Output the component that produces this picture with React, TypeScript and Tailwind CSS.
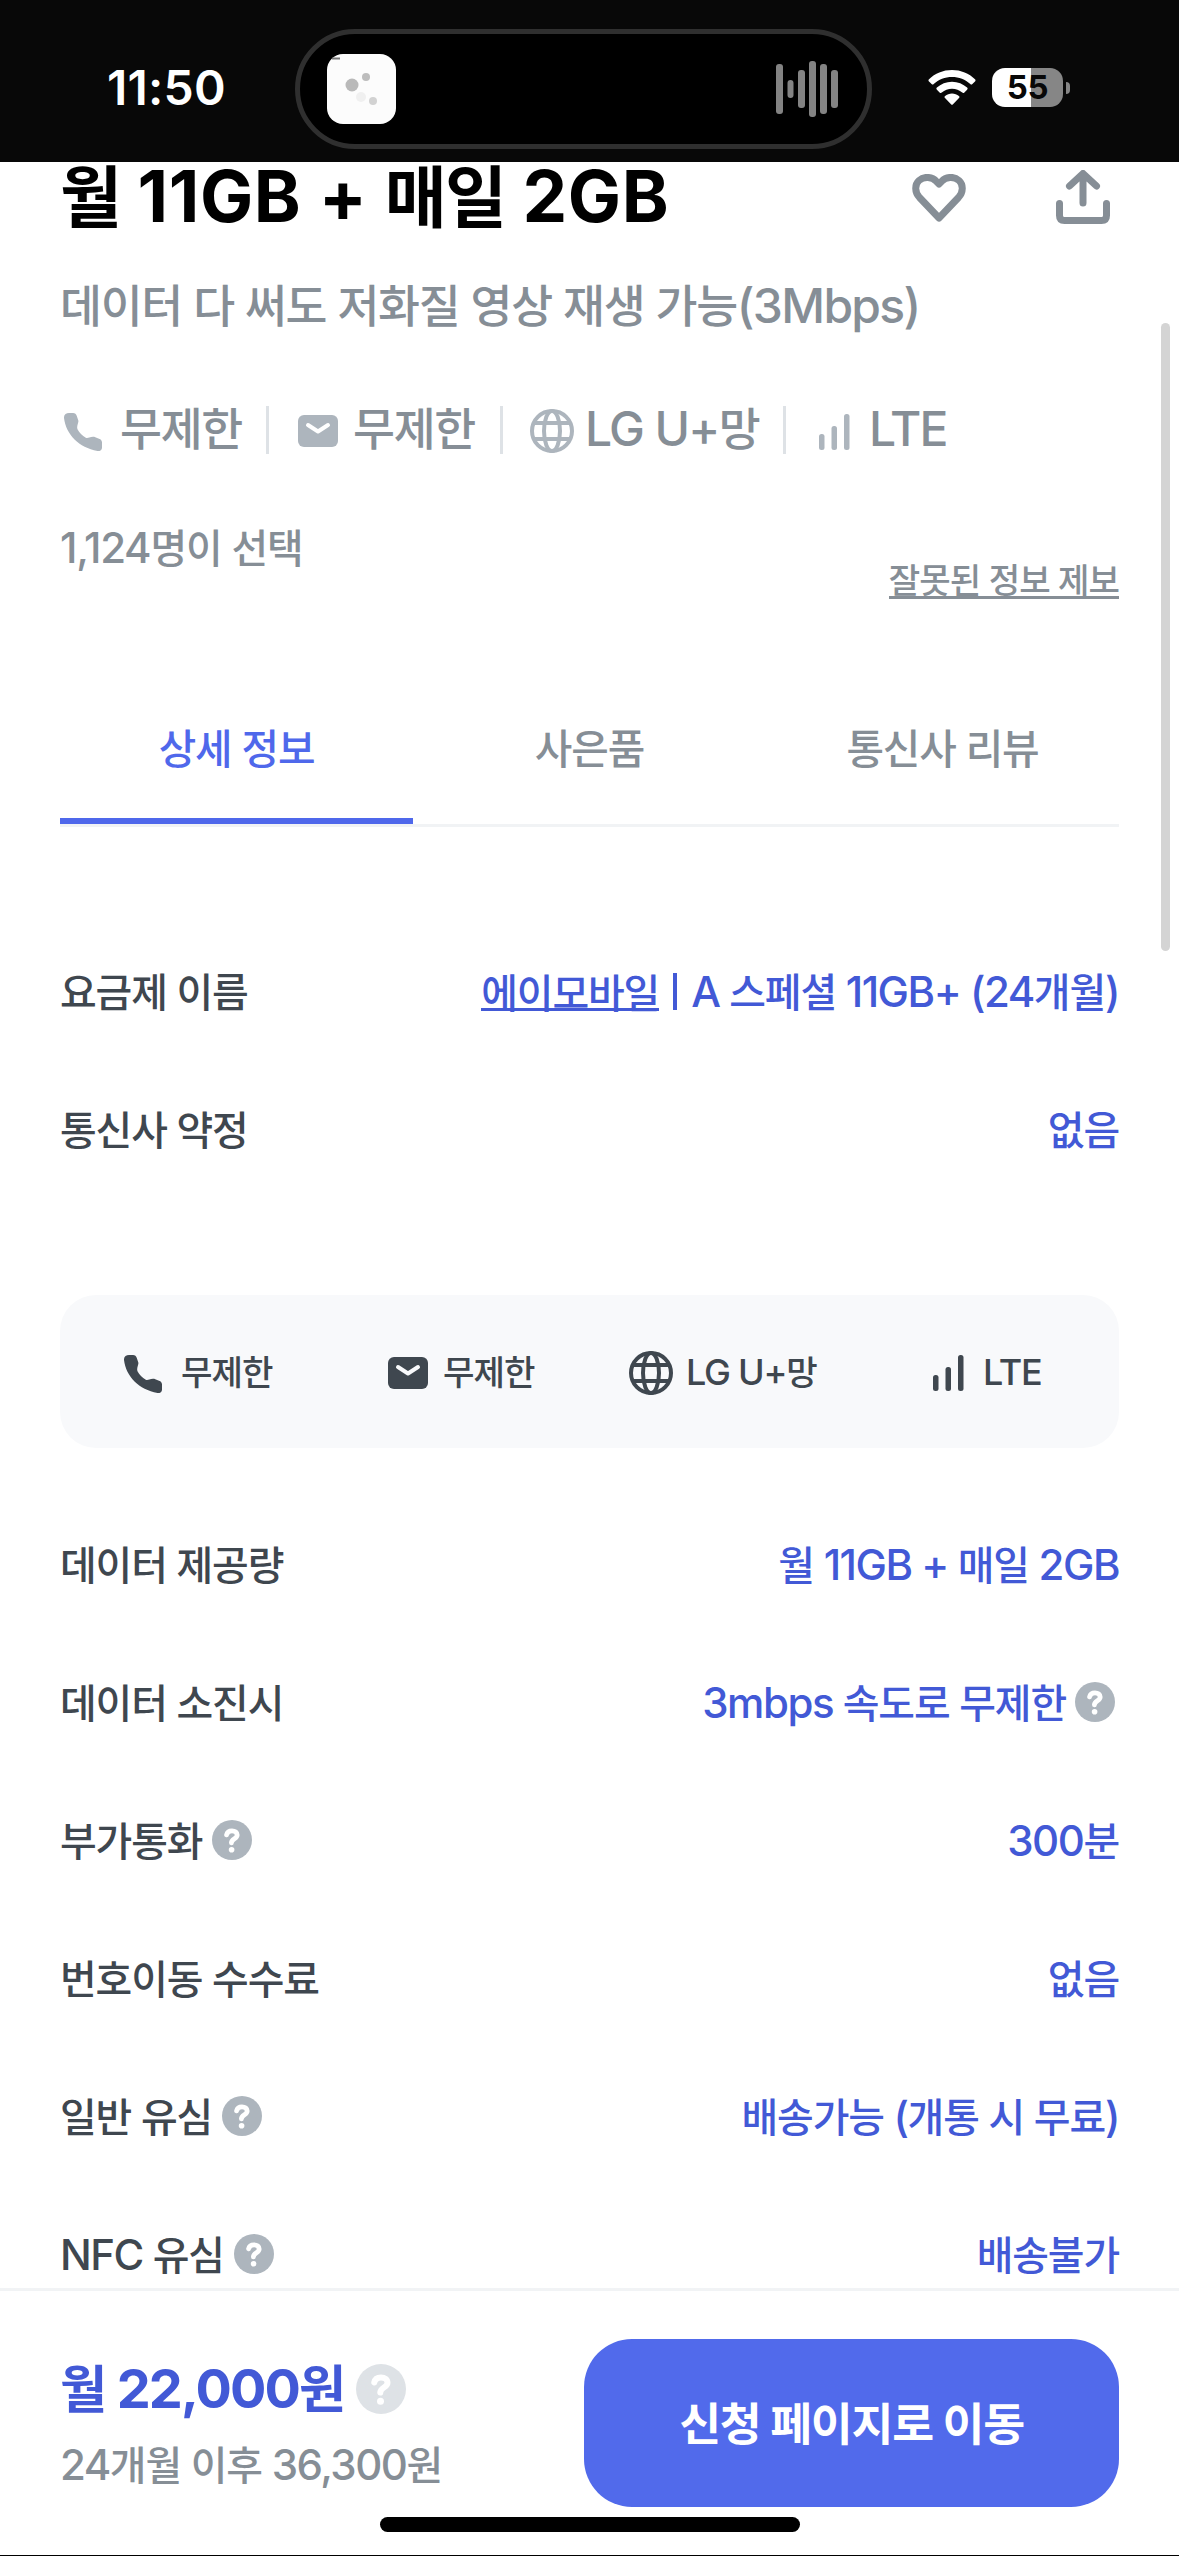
import React from "react";

const HANGUL = /([\u3131-\u318e\uac00-\ud7a3]+)/;

/** Mixed Latin / Hangul text: each script gets its own face and tracking. */
function T({ children, className = "tracking-[-0.035em]" }: { children: string; className?: string }) {
  return (
    <span className={`whitespace-pre ${className}`}>
      {children.split(HANGUL).map((part, i) =>
        HANGUL.test(part) ? (
          <span
            key={i}
            className="font-['Noto_Sans_CJK_KR',sans-serif] text-[0.95em] leading-none tracking-[-0.028em]"
          >
            {part}
          </span>
        ) : (
          part
        ),
      )}
    </span>
  );
}

function PhoneIcon() {
  return (
    <svg width="38" height="38" viewBox="0 0 38 38" fill="currentColor">
      <path d="M5 0H9C11 0 12.2 1.2 12.8 3L14.3 7.6C14.6 8.6 14.2 9.4 13.9 10.4C13.3 12.4 12.8 14.4 13.5 16.2C15.3 19.6 18.2 22.8 21.8 24.7C23 25.3 24 24.9 25.3 24.5C27.2 23.9 29.4 23.6 31.3 24.2L35.6 26.1C37.2 26.8 38 28 38 29.6V34.5C38 37 36 38.6 33.5 38C15 34.6 2 21.5 0 5C-.3 2.200 1.800 0 5 0Z" />
    </svg>
  );
}

function MailIcon({ flap }: { flap: string }) {
  return (
    <svg width="40" height="32" viewBox="0 0 40 32">
      <rect width="40" height="32" rx="6" fill="currentColor" />
      <path d="M10 10L20 16.500L30 10" fill="none" stroke={flap} strokeWidth="4" strokeLinecap="round" strokeLinejoin="round" />
    </svg>
  );
}

function GlobeIcon() {
  return (
    <svg width="44" height="44" viewBox="0 0 44 44" fill="none" stroke="currentColor" strokeWidth="4">
      <circle cx="22" cy="22" r="20" />
      <ellipse cx="22" cy="22" rx="8" ry="20" />
      <path d="M4 14H40M4 30H40" />
    </svg>
  );
}

function SignalIcon() {
  return (
    <svg width="31" height="36" viewBox="0 0 31 36" fill="currentColor">
      <rect x="0" y="20" width="5.500" height="16" rx="2.500" />
      <rect x="12.500" y="12" width="5.500" height="24" rx="2.500" />
      <rect x="25" y="0" width="5.500" height="36" rx="2.500" />
    </svg>
  );
}

function HelpIcon({ size = 40 }: { size?: number }) {
  return (
    <svg width={size} height={size} viewBox="0 0 40 40" fill="none">
      <circle cx="20" cy="20" r="20" fill="currentColor" />
      <path d="M14.600 14.800C15.200 12 17.300 10.800 20 10.800C23 10.800 25.200 12.300 25.200 15C25.200 18.800 19.600 18.600 19.400 22.800" stroke="#fff" strokeWidth="4.800" strokeLinecap="round" strokeLinejoin="round" />
      <circle cx="19.600" cy="29.800" r="2.800" fill="#fff" />
    </svg>
  );
}

function StatusBar() {
  return (
    <header className="relative z-10 flex h-[162px] shrink-0 items-start bg-[#080808] text-white">
      <div className="ml-[107px] mt-[58px] w-[188px] text-[48px] font-semibold leading-[60px] tracking-[0.005em]">11:50</div>
      <div className="mt-[29px] flex h-[120px] w-[577px] items-center justify-between rounded-full border-[5px] border-[#2f2f2f] bg-black pl-[27px] pr-[28px]">
        <svg width="69" height="70" viewBox="0 0 69 70">
          <rect width="69" height="70" rx="16" fill="#fcfcfc" />
          <circle cx="25" cy="31" r="6.500" fill="#b9b9b9" />
          <circle cx="39" cy="23" r="4" fill="#bdbdbd" />
          <circle cx="34" cy="43" r="5" fill="#f0f0f0" />
          <circle cx="46" cy="47" r="4" fill="#d2d2d2" />
          <path d="M5 4.500H13" stroke="#777" strokeWidth="2" />
        </svg>
        <svg width="63" height="56" viewBox="0 0 63 56" fill="#838383">
          <rect x="0" y="3" width="7" height="50" rx="3" />
          <rect x="11.500" y="19" width="6" height="18" rx="3" />
          <rect x="22" y="9" width="7" height="38" rx="3" />
          <rect x="33" y="0" width="7" height="56" rx="3" />
          <rect x="44" y="3" width="7" height="50" rx="3" />
          <rect x="55" y="9" width="7" height="38" rx="3" />
        </svg>
      </div>
      <svg className="ml-[56px] mt-[70px]" width="48" height="35" viewBox="0 0 48 35" fill="#fff">
        <path d="M24 0C33 0 41 3.400 47 9.200C47.700 9.900 47.700 10.700 47 11.400L44.400 14C43.700 14.700 43 14.700 42.300 14C37.400 9.400 31 6.900 24 6.900C17 6.900 10.600 9.400 5.700 14C5 14.700 4.300 14.700 3.600 14L1 11.400C.3 10.700 .3 9.900 1 9.200C7 3.400 15 0 24 0Z" />
        <path d="M24 11.800C29.800 11.800 35.100 14 39.100 17.600C39.800 18.300 39.800 19 39.100 19.700L36.400 22.400C35.700 23.100 35 23.100 34.200 22.500C31.400 20.100 27.900 18.700 24 18.700C20.100 18.700 16.600 20.100 13.800 22.500C13 23.100 12.300 23.100 11.600 22.400L8.900 19.700C8.200 19 8.200 18.300 8.900 17.600C12.900 14 18.200 11.800 24 11.800Z" />
        <path d="M24 23.600C26.600 23.600 29 24.500 30.900 26C31.700 26.700 31.700 27.400 31 28.100L25 34.200C24.300 34.900 23.700 34.900 23 34.200L17 28.100C16.300 27.400 16.300 26.700 17.100 26C19 24.500 21.400 23.600 24 23.600Z" />
      </svg>
      <div className="ml-[16px] mt-[68px] flex items-center">
        <div className="flex h-[39px] w-[71px] items-center justify-center rounded-[13px] bg-[linear-gradient(90deg,#fff_55%,#868686_55%)] text-[33px] font-bold leading-none tracking-[-0.01em] text-[#080808]">
          55
        </div>
        <div className="ml-[3px] h-[12px] w-[4px] rounded-r-full bg-[#868686]" />
      </div>
    </header>
  );
}

function PlanHeader() {
  return (
    <section>
      <div className="flex h-[66px] items-center justify-between">
        <h1 className="text-[71px] font-bold leading-none text-black">
          <T className="tracking-[0.008em]">월 11GB + 매일 2GB</T>
        </h1>
        <div className="flex items-center pr-[9px] text-[#868e96]">
          <svg className="mt-[6px]" width="54" height="48" viewBox="0 0 54 48" fill="none" stroke="currentColor" strokeWidth="7" strokeLinecap="round" strokeLinejoin="round">
            <path d="M27 44L7.500 23.500C2.500 18 2.600 10.500 7 6.500C12 2 20 2.500 24.500 7.500L27 10L29.500 7.500C34 2.500 42 2 47 6.500C51.400 10.500 51.500 18 46.500 23.500Z" />
          </svg>
          <svg className="ml-[90px] mt-[4px]" width="54" height="54" viewBox="0 0 54 54" fill="none" stroke="currentColor" strokeWidth="7" strokeLinecap="round" strokeLinejoin="round">
            <path d="M27 33V4M13.500 16L27 3.500L40.500 16M3.500 33.500V45.500Q3.500 50.500 8.500 50.500H45.500Q50.500 50.500 50.500 45.500V33.500" />
          </svg>
        </div>
      </div>

      <p className="mt-[47px] flex h-[61px] items-center text-[48px] font-medium leading-none">
        <T>데이터 다 써도 저화질 영상 재생 가능(3Mbps)</T>
      </p>

      <div className="mt-[70px] flex h-[48px] items-center text-[48px] font-medium leading-none">
        <span className="ml-[4px] mt-[4px] flex w-[56px] text-[#adb5bd]"><PhoneIcon /></span>
        <span className="w-[146px] pb-[3px]"><T>무제한</T></span>
        <span className="h-[48px] w-[3px] bg-[#dee2e6]" />
        <span className="ml-[29px] mt-[2px] flex w-[55px] text-[#adb5bd]"><MailIcon flap="#fff" /></span>
        <span className="w-[147px] pb-[3px]"><T>무제한</T></span>
        <span className="h-[48px] w-[3px] bg-[#dee2e6]" />
        <span className="ml-[27px] mt-[2px] flex w-[55px] text-[#adb5bd]"><GlobeIcon /></span>
        <span className="w-[198px] pb-[3px]"><T>LG U+망</T></span>
        <span className="h-[48px] w-[3px] bg-[#dee2e6]" />
        <span className="ml-[33px] mt-[3px] flex w-[50px] text-[#adb5bd]"><SignalIcon /></span>
        <span className="pb-[3px]"><T>LTE</T></span>
      </div>

      <div className="mt-[64px] flex h-[86px] justify-between leading-none">
        <p className="flex h-[58px] items-center text-[42px] font-medium"><T className="tracking-[-0.03em]">1,124명이 선택</T></p>
        <a className="mb-[5px] h-[38px] self-end border-b-[3px] border-[#868e96] text-[36px] font-medium leading-[38px]"><T>잘못된 정보 제보</T></a>
      </div>
    </section>
  );
}

function Tabs() {
  return (
    <nav className="mt-[70px] grid grid-cols-3 border-b-[3px] border-[#f1f3f5] text-[43px] font-medium leading-none">
      <div className="flex h-[150px] items-center justify-center border-b-[6px] border-[#4f68eb] pt-[4px] text-[#4f68eb]"><T>상세 정보</T></div>
      <div className="flex h-[150px] items-center justify-center pb-[2px]"><T>사은품</T></div>
      <div className="flex h-[150px] items-center justify-center pb-[2px]"><T>통신사 리뷰</T></div>
    </nav>
  );
}

function Row({ label, help, children }: { label: string; help?: boolean; children: React.ReactNode }) {
  return (
    <div className="flex h-[138px] shrink-0 items-center justify-between text-[42px] font-medium leading-none">
      <div className="flex items-center text-[#3f474f]">
        <T>{label}</T>
        {help && <span className="ml-[10px] text-[#adb5bd]"><HelpIcon /></span>}
      </div>
      <div className="flex items-center text-[#4259d6]">{children}</div>
    </div>
  );
}

export default function App() {
  return (
    <div className="relative flex h-[2556px] w-[1179px] flex-col overflow-hidden bg-white font-[Inter,'Noto_Sans_CJK_KR',sans-serif] text-[#868e96]">
      <StatusBar />

      <main className="h-[2126px] shrink-0 px-[60px]">
        <PlanHeader />
        <Tabs />

        <section className="mt-[95px]">
          <Row label="요금제 이름">
            <span className="h-[40px] border-b-[3px] border-[#4259d6] leading-[42px]"><T>에이모바일</T></span>
            <span className="ml-[14px] mr-[14px] h-[37px] w-[4px] bg-[#4259d6]" />
            <T>A 스페셜 11GB+ (24개월)</T>
          </Row>
          <Row label="통신사 약정"><T>없음</T></Row>
        </section>

        <section className="mt-[97px] flex h-[153px] items-center rounded-[36px] bg-[#f8f9fb] text-[36px] font-medium leading-none text-[#3f474f]">
          <span className="ml-[64px] mt-[4px] flex w-[57px]"><PhoneIcon /></span>
          <span className="w-[207px]"><T>무제한</T></span>
          <span className="mt-[2px] flex w-[55px]"><MailIcon flap="#f8f9fb" /></span>
          <span className="w-[186px]"><T>무제한</T></span>
          <span className="mt-[2px] flex w-[57px]"><GlobeIcon /></span>
          <span className="w-[247px]"><T>LG U+망</T></span>
          <span className="mt-[3px] flex w-[50px]"><SignalIcon /></span>
          <T>LTE</T>
        </section>

        <section className="mt-[47px]">
          <Row label="데이터 제공량"><T>월 11GB + 매일 2GB</T></Row>
          <Row label="데이터 소진시">
            <T>3mbps 속도로 무제한</T>
            <span className="ml-[9px] mr-[4px] text-[#adb5bd]"><HelpIcon /></span>
          </Row>
          <Row label="부가통화" help><T>300분</T></Row>
          <Row label="번호이동 수수료"><T>없음</T></Row>
          <Row label="일반 유심" help><T>배송가능 (개통 시 무료)</T></Row>
          <Row label="NFC 유심" help><T>배송불가</T></Row>
        </section>
      </main>

      <footer className="relative flex h-[268px] shrink-0 items-start justify-between border-b border-t-[3px] border-b-black border-t-[#f1f3f5] bg-white px-[60px] leading-none">
        <div>
          <div className="mt-[67px] flex h-[60px] items-center text-[54px] font-bold text-[#4259d6]">
            <T>월 22,000원</T>
            <span className="ml-[11px] mt-[2px] text-[#dee2e6]"><HelpIcon size={50} /></span>
          </div>
          <div className="mt-[21px] flex h-[50px] items-center text-[42px] font-medium"><T>24개월 이후 36,300원</T></div>
        </div>
        <button className="mt-[48px] flex h-[168px] w-[535px] items-center justify-center rounded-[48px] bg-[#516aeb] text-[48px] font-bold text-white">
          <T>신청 페이지로 이동</T>
        </button>
        <div className="absolute left-[380px] top-[226px] h-[15px] w-[420px] rounded-full bg-black" />
      </footer>

      <div className="absolute left-[1161px] top-[323px] h-[628px] w-[9px] rounded-full bg-[#d4d4d4]" />
    </div>
  );
}
